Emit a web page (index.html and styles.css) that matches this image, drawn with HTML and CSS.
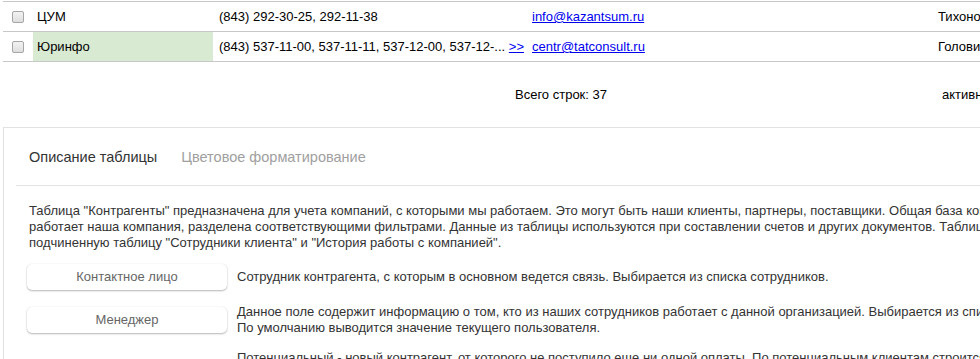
FILE: index.html
```html
<!DOCTYPE html>
<html lang="ru">
<head>
<meta charset="utf-8">
<link rel="stylesheet" href="styles.css">
</head>
<body>
<div class="page">
  <table class="grid">
    <colgroup>
      <col class="c-check"><col class="c-name"><col class="c-phone"><col class="c-mail"><col class="c-empty"><col class="c-person">
    </colgroup>
    <tr>
      <td class="check"><span class="box"></span></td>
      <td class="name">ЦУМ</td>
      <td>(843) 292-30-25, 292-11-38</td>
      <td><a href="#">info@kazantsum.ru</a></td>
      <td></td>
      <td>Тихонов Сергей</td>
    </tr>
    <tr>
      <td class="check"><span class="box"></span></td>
      <td class="name hl">Юринфо</td>
      <td>(843) 537-11-00, 537-11-11, 537-12-00, 537-12-... <a href="#">&gt;&gt;</a></td>
      <td><a href="#">centr@tatconsult.ru</a></td>
      <td></td>
      <td>Головина Елена</td>
    </tr>
  </table>
  <div class="footer">
    <span></span>
    <span>Всего строк: 37</span>
    <span>активных: 35</span>
  </div>
  <div class="panel">
    <div class="tabs">
      <span class="tab active">Описание таблицы</span>
      <span class="tab">Цветовое форматирование</span>
    </div>
    <p class="desc">Таблица "Контрагенты" предназначена для учета компаний, с которыми мы работаем. Это могут быть наши клиенты, партнеры, поставщики. Общая база компаний, с которыми<br>работает наша компания, разделена соответствующими фильтрами. Данные из таблицы используются при составлении счетов и других документов. Таблица имеет<br>подчиненную таблицу "Сотрудники клиента" и "История работы с компанией".</p>
    <div class="field">
      <span class="btn">Контактное лицо</span>
      <p>Сотрудник контрагента, с которым в основном ведется связь. Выбирается из списка сотрудников.</p>
    </div>
    <div class="field">
      <span class="btn">Менеджер</span>
      <p>Данное поле содержит информацию о том, кто из наших сотрудников работает с данной организацией. Выбирается из списка сотрудников.<br>По умолчанию выводится значение текущего пользователя.</p>
    </div>
    <div class="field">
      <span class="btn">Статус</span>
      <p>Потенциальный - новый контрагент, от которого не поступило еще ни одной оплаты. По потенциальным клиентам строится воронка продаж.<br>Текущий - контрагент, с которым ведется работа и от которого поступают оплаты.<br>Архивный - контрагент, работа с которым прекращена.</p>
    </div>
  </div>
</div>
</body>
</html>
```
FILE: styles.css
```css
html, body {
  margin: 0;
  padding: 0;
  background: #fff;
  overflow: hidden;
}
body {
  font-family: "Liberation Sans", Arial, sans-serif;
  font-size: 13px;
  color: #000;
}
.page {
  width: 1500px;
  padding-top: 1px;
  padding-left: 3px;
}
.grid {
  border-collapse: collapse;
  table-layout: fixed;
  width: 1300px;
  border-top: 1px solid #c8c8c8;
}
.c-check { width: 30px; }
.c-name { width: 180px; }
.c-phone { width: 313px; }
.c-mail { width: 203px; }
.c-empty { width: 203px; }
.c-person { width: 371px; }
.grid td {
  height: 29px;
  padding: 0 6px;
  border-bottom: 1px solid #c8c8c8;
  vertical-align: middle;
  white-space: nowrap;
  overflow: hidden;
}
.grid td.check {
  padding: 0 0 0 9px;
}
.grid td.name {
  padding-left: 4px;
}
.grid td.hl {
  background: #d9ead3;
}
.box {
  display: block;
  width: 10px;
  height: 10px;
  border: 1px solid #a6a6a6;
  border-radius: 2px;
  background: linear-gradient(#f2f2f2, #dedede);
}
a {
  color: #0000ee;
  text-decoration: underline;
}
.footer {
  display: grid;
  grid-template-columns: 512px 427px auto;
  align-items: center;
  height: 65px;
}
.panel {
  border-top: 1px solid #e2e2e2;
  border-left: 1px solid #e2e2e2;
  color: #333;
}
.tabs {
  display: flex;
  gap: 24px;
  align-items: center;
  height: 57px;
  margin-left: 12px;
  padding-left: 13px;
  border-bottom: 1px solid #e2e2e2;
}
.tab {
  font-size: 14.5px;
  color: #a0a0a0;
}
.tab.active {
  color: #333;
}
.desc {
  margin: 17px 0 13px 25px;
  line-height: 16px;
  white-space: nowrap;
}
.field {
  display: flex;
  align-items: center;
  gap: 10px;
  margin: 0 0 14px 23px;
}
.field p {
  margin: 0;
  line-height: 16px;
  white-space: nowrap;
}
.btn {
  flex: none;
  width: 200px;
  height: 26px;
  line-height: 26px;
  text-align: center;
  color: #666;
  background: #fff;
  border-radius: 5px;
  box-shadow: 0 1px 2px rgba(0, 0, 0, 0.28), 0 0 1px rgba(0, 0, 0, 0.12);
}
```
